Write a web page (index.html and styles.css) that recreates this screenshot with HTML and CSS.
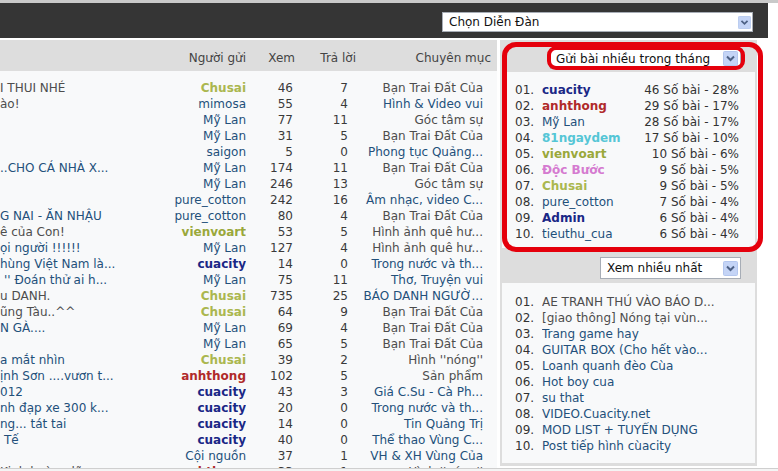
FILE: index.html
```html
<!DOCTYPE html>
<html lang="vi">
<head>
<meta charset="utf-8">
<title>Diễn Đàn</title>
<link rel="stylesheet" href="styles.css">
</head>
<body>
<div class="topstrip"></div>
<div class="topbar">
  <div class="select select-forum">
    <span class="select-text">Chọn Diễn Đàn</span>
    <svg class="arrow" viewBox="0 0 15 15"><rect x="0.5" y="0.5" width="14" height="14" rx="1" fill="#c4d4f6" stroke="#b3c6ee"/><path d="M4 5.5 L7.5 9 L11 5.5" fill="none" stroke="#4d6185" stroke-width="2"/></svg>
  </div>
</div>
<div class="main">
  <div class="left">
    <div class="thead">
      <span>Người gửi</span><span>Xem</span><span>Trả lời</span><span>Chuyên mục</span>
    </div>
    <div class="tbody">
      <div class="row"><span class="t t-gray">I THUI NHÉ</span><span class="u u-chusai">Chusai</span><span class="n">46</span><span class="n">7</span><span class="c c-gray">Bạn Trai Đất Của</span></div>
      <div class="row"><span class="t t-gray">ào!</span><span class="u u-link">mimosa</span><span class="n">55</span><span class="n">4</span><span class="c c-link">Hình &amp; Video vui</span></div>
      <div class="row"><span class="t"></span><span class="u u-link">Mỹ Lan</span><span class="n">77</span><span class="n">11</span><span class="c c-gray">Góc tâm sự</span></div>
      <div class="row"><span class="t"></span><span class="u u-link">Mỹ Lan</span><span class="n">31</span><span class="n">5</span><span class="c c-gray">Bạn Trai Đất Của</span></div>
      <div class="row"><span class="t"></span><span class="u u-link">saigon</span><span class="n">5</span><span class="n">0</span><span class="c c-link">Phong tục Quảng...</span></div>
      <div class="row"><span class="t t-link">..CHO CẢ NHÀ X...</span><span class="u u-link">Mỹ Lan</span><span class="n">174</span><span class="n">11</span><span class="c c-gray">Bạn Trai Đất Của</span></div>
      <div class="row"><span class="t"></span><span class="u u-link">Mỹ Lan</span><span class="n">246</span><span class="n">13</span><span class="c c-gray">Góc tâm sự</span></div>
      <div class="row"><span class="t"></span><span class="u u-link">pure_cotton</span><span class="n">242</span><span class="n">16</span><span class="c c-link">Âm nhạc, video C...</span></div>
      <div class="row"><span class="t t-link">G NAI - ĂN NHẬU</span><span class="u u-link">pure_cotton</span><span class="n">80</span><span class="n">4</span><span class="c c-gray">Bạn Trai Đất Của</span></div>
      <div class="row"><span class="t t-gray">ê của Con!</span><span class="u u-vien">vienvoart</span><span class="n">53</span><span class="n">5</span><span class="c c-gray">Hình ảnh quê hư...</span></div>
      <div class="row"><span class="t t-link">ọi người !!!!!!</span><span class="u u-link">Mỹ Lan</span><span class="n">127</span><span class="n">4</span><span class="c c-gray">Hình ảnh quê hư...</span></div>
      <div class="row"><span class="t t-link">hùng Việt Nam là...</span><span class="u u-cua">cuacity</span><span class="n">14</span><span class="n">0</span><span class="c c-link">Trong nước và th...</span></div>
      <div class="row"><span class="t t-link t-pad">'' Đoán thử ai h...</span><span class="u u-link">Mỹ Lan</span><span class="n">75</span><span class="n">11</span><span class="c c-link">Thơ, Truyện vui</span></div>
      <div class="row"><span class="t t-gray">u DANH.</span><span class="u u-chusai">Chusai</span><span class="n">735</span><span class="n">25</span><span class="c c-link">BÁO DANH NGƯỜ...</span></div>
      <div class="row"><span class="t t-gray">ũng Tàu..^^</span><span class="u u-chusai">Chusai</span><span class="n">64</span><span class="n">9</span><span class="c c-gray">Bạn Trai Đất Của</span></div>
      <div class="row"><span class="t t-link">N GÀ....</span><span class="u u-link">Mỹ Lan</span><span class="n">69</span><span class="n">4</span><span class="c c-gray">Bạn Trai Đất Của</span></div>
      <div class="row"><span class="t"></span><span class="u u-link">Mỹ Lan</span><span class="n">65</span><span class="n">5</span><span class="c c-gray">Bạn Trai Đất Của</span></div>
      <div class="row"><span class="t t-link">a mắt nhìn</span><span class="u u-chusai">Chusai</span><span class="n">39</span><span class="n">2</span><span class="c c-gray">Hình ''nóng''</span></div>
      <div class="row"><span class="t t-link">ịnh Sơn ....vươn t...</span><span class="u u-anh">anhthong</span><span class="n">102</span><span class="n">5</span><span class="c c-gray">Sản phẩm</span></div>
      <div class="row"><span class="t t-link">012</span><span class="u u-cua">cuacity</span><span class="n">43</span><span class="n">3</span><span class="c c-link">Giá C.Su - Cà Ph...</span></div>
      <div class="row"><span class="t t-link">nh đạp xe 300 k...</span><span class="u u-cua">cuacity</span><span class="n">20</span><span class="n">0</span><span class="c c-link">Trong nước và th...</span></div>
      <div class="row"><span class="t t-link">ng... tát tai</span><span class="u u-cua">cuacity</span><span class="n">14</span><span class="n">0</span><span class="c c-link">Tin Quảng Trị</span></div>
      <div class="row"><span class="t t-link t-pad">Tế</span><span class="u u-cua">cuacity</span><span class="n">40</span><span class="n">0</span><span class="c c-link">Thể thao Vùng C...</span></div>
      <div class="row"><span class="t"></span><span class="u u-link">Cội nguồn</span><span class="n">37</span><span class="n">1</span><span class="c c-link">VH &amp; XH Vùng Của</span></div>
      <div class="row"><span class="t t-gray">Kinh hoàng lũ...</span><span class="u u-anh">anhthong</span><span class="n">33</span><span class="n">1</span><span class="c c-gray">Hình ''nóng''</span></div>
    </div>
  </div>
  <div class="side">
    <div class="side-head">
      <div class="select select-top">
        <span class="select-text">Gửi bài nhiều trong tháng</span>
        <svg class="arrow" viewBox="0 0 15 15"><rect x="0.5" y="0.5" width="14" height="14" rx="1" fill="#c4d4f6" stroke="#b3c6ee"/><path d="M4 5.5 L7.5 9 L11 5.5" fill="none" stroke="#4d6185" stroke-width="2"/></svg>
      </div>
    </div>
    <div class="list">
      <div class="item"><span class="num">01.</span><span class="name u-cua">cuacity</span><span class="stat">46 Số bài - 28%</span></div>
      <div class="item"><span class="num">02.</span><span class="name u-anh">anhthong</span><span class="stat">29 Số bài - 17%</span></div>
      <div class="item"><span class="num">03.</span><span class="name u-link">Mỹ Lan</span><span class="stat">28 Số bài - 17%</span></div>
      <div class="item"><span class="num">04.</span><span class="name u-81">81ngaydem</span><span class="stat">17 Số bài - 10%</span></div>
      <div class="item"><span class="num">05.</span><span class="name u-vien">vienvoart</span><span class="stat">10 Số bài - 6%</span></div>
      <div class="item"><span class="num">06.</span><span class="name u-doc">Độc Bước</span><span class="stat">9 Số bài - 5%</span></div>
      <div class="item"><span class="num">07.</span><span class="name u-chusai">Chusai</span><span class="stat">9 Số bài - 5%</span></div>
      <div class="item"><span class="num">08.</span><span class="name u-link">pure_cotton</span><span class="stat">7 Số bài - 4%</span></div>
      <div class="item"><span class="num">09.</span><span class="name u-cua">Admin</span><span class="stat">6 Số bài - 4%</span></div>
      <div class="item"><span class="num">10.</span><span class="name u-link">tieuthu_cua</span><span class="stat">6 Số bài - 4%</span></div>
    </div>
    <div class="side-head side-head-2">
      <div class="select select-views">
        <span class="select-text">Xem nhiều nhất</span>
        <svg class="arrow" viewBox="0 0 15 15"><rect x="0.5" y="0.5" width="14" height="14" rx="1" fill="#c4d4f6" stroke="#b3c6ee"/><path d="M4 5.5 L7.5 9 L11 5.5" fill="none" stroke="#4d6185" stroke-width="2"/></svg>
      </div>
    </div>
    <div class="list list-2">
      <div class="item"><span class="num">01.</span><span class="name t-gray">AE TRANH THỦ VÀO BÁO D...</span></div>
      <div class="item"><span class="num">02.</span><span class="name t-gray">[giao thông] Nóng tại vùn...</span></div>
      <div class="item"><span class="num">03.</span><span class="name t-link">Trang game hay</span></div>
      <div class="item"><span class="num">04.</span><span class="name t-link">GUITAR BOX (Cho hết vào...</span></div>
      <div class="item"><span class="num">05.</span><span class="name t-link">Loanh quanh đèo Cùa</span></div>
      <div class="item"><span class="num">06.</span><span class="name t-link">Hot boy cua</span></div>
      <div class="item"><span class="num">07.</span><span class="name t-link">su that</span></div>
      <div class="item"><span class="num">08.</span><span class="name t-link">VIDEO.Cuacity.net</span></div>
      <div class="item"><span class="num">09.</span><span class="name t-link">MOD LIST + TUYỂN DỤNG</span></div>
      <div class="item"><span class="num">10.</span><span class="name t-link">Post tiếp hình cùacity</span></div>
    </div>
  </div>
</div>
<div class="ring ring-outer"></div>
<div class="ring ring-inner"></div>
<div class="frame-bottom"></div>
</body>
</html>
```
FILE: styles.css
```css
* { box-sizing: border-box; }
html, body { margin: 0; padding: 0; }
body {
  font-family: "DejaVu Sans", Verdana, sans-serif;
  font-size: 12px;
  line-height: 16px;
  color: #333;
  background: #fff;
  width: 778px;
  height: 471px;
  overflow: hidden;
  position: relative;
}
.topstrip { height: 3px; background: #c9c9c9; }
.topbar {
  height: 35px;
  background: #353535;
  margin-right: 10px;
  display: flex;
  justify-content: flex-end;
  align-items: flex-start;
  padding: 9px 15px 0 0;
}
.select {
  display: flex;
  align-items: center;
  background: #fff;
  border: 1px solid #a7adb6;
  height: 21px;
  padding-left: 6px;
  color: #111;
  white-space: nowrap;
}
.select-forum { width: 311px; height: 20px; }
.select-top { width: 191px; padding-left: 5px; }
.select-views { width: 141px; height: 22px; }
.arrow { width: 15px; height: 15px; margin-left: auto; margin-right: 2px; flex: none; }
.select-forum .arrow { width: 13px; height: 13px; margin-right: 1px; }
.main { display: flex; margin-top: 2px; align-items: flex-start; }
.left { width: 497px; background: #f8f9fa; height: 440px; overflow: hidden; }
.thead {
  height: 31px;
  background: #dddddd;
  display: grid;
  grid-template-columns: 246px 49px 61px 135px;
  padding-top: 10px;
  color: #444;
}
.thead span { text-align: right; white-space: nowrap; }
.tbody { padding-top: 9px; }
.row {
  display: grid;
  grid-template-columns: 150px 96px 47px 55px 135px;
  height: 16px;
  white-space: nowrap;
}
.row > span { overflow: hidden; }
.t { text-align: left; }
.t-pad { padding-left: 4px; }
.u, .n, .c { text-align: right; }
.n { color: #3a3a3a; }
.t-gray, .c-gray { color: #4d4d4d; }
.t-link, .c-link, .u-link { color: #23507a; }
.u-chusai { color: #abb74f; font-weight: bold; }
.u-vien { color: #9aa83a; font-weight: bold; }
.u-cua { color: #1a2786; font-weight: bold; }
.u-anh { color: #b02a2a; font-weight: bold; }
.u-81 { color: #55c6d6; font-weight: bold; }
.u-doc { color: #d57bd0; font-weight: bold; }

.side {
  width: 257px;
  margin-left: 3px;
  background: #dddddd;
  padding: 0 2px 3px;
}
.side-head {
  display: flex;
  justify-content: flex-end;
  padding: 8px 14px 3px 0;
}
.side-head-2 { padding: 9px 14px 4px 0; }
.list {
  background: #f8f9fa;
  padding: 10px 16px 6px 13px;
}
.list-2 { padding: 11px 16px 9px 13px; }
.item { display: flex; height: 16px; white-space: nowrap; }
.num { width: 27px; color: #333; flex: none; }
.name { flex: 1; overflow: hidden; }
.stat { color: #333; text-align: right; }

.ring {
  position: absolute;
  border: 5px solid #e5000c;
  pointer-events: none;
}
.ring-outer { left: 502px; top: 42px; width: 261px; height: 210px; border-radius: 14px; }
.ring-inner { left: 547px; top: 46px; width: 198px; height: 24px; border-width: 4px; border-radius: 9px; }
.frame-bottom {
  position: fixed;
  left: 0;
  right: 0;
  bottom: 0;
  height: 3px;
  border-top: 1px solid #cfcfcf;
  background: #f4f4f4;
}
```
